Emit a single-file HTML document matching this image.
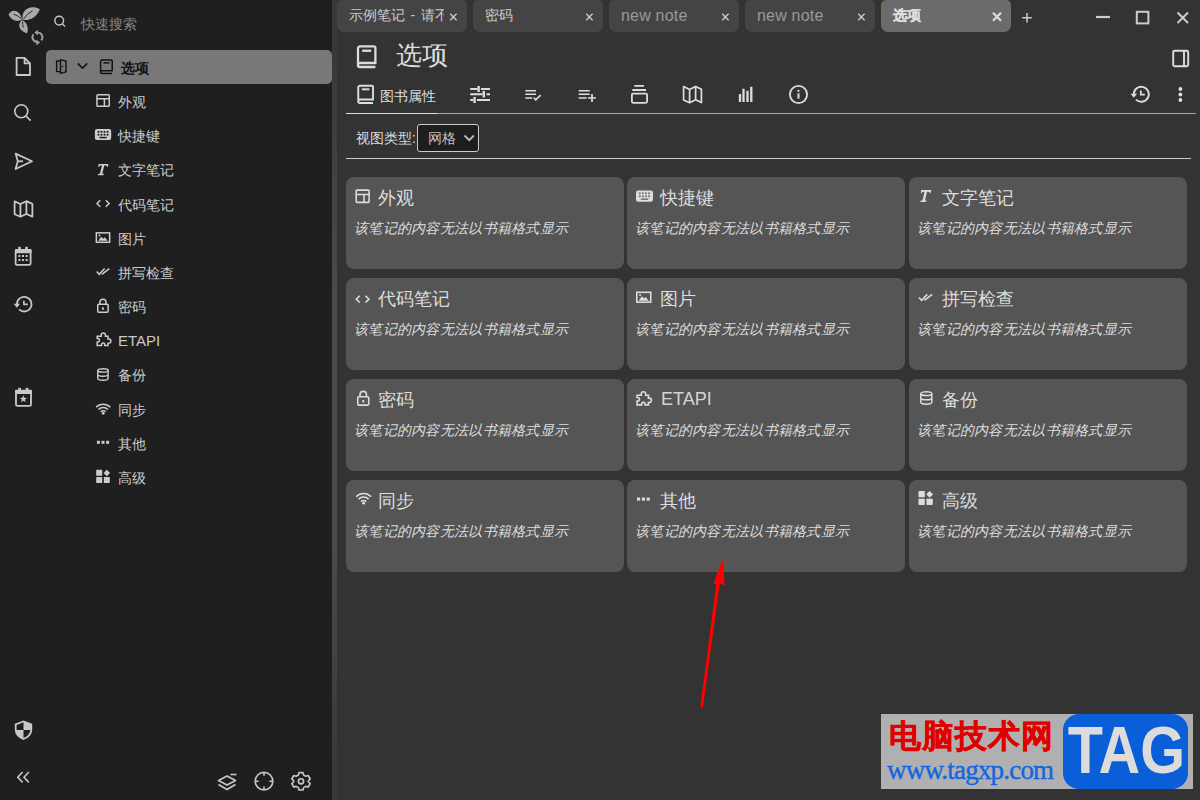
<!DOCTYPE html>
<html><head><meta charset="utf-8">
<style>
*{box-sizing:border-box}
html,body{margin:0;padding:0;width:1200px;height:800px;overflow:hidden;background:#333;font-family:"Liberation Sans",sans-serif;color:#ccc}
.a{position:absolute}
svg{position:absolute;overflow:visible}
#side{left:0;top:0;width:332px;height:800px;background:#1f1f1f}
#strip{left:332px;top:0;width:5px;height:800px;background:linear-gradient(#383838 0px,#393939 60px,#4b4b4b 300px,#4b4b4b 540px,#393939 760px,#383838 800px)}
.tab{top:0;height:32px;width:130px;background:#444;border-radius:5px 5px 7px 7px;font-size:14px;color:#ccc}
.tab .t{position:absolute;left:12px;top:6px;white-space:nowrap;line-height:18px}
.tab .x{position:absolute;right:10px;top:10px;width:12px;height:12px}
.item{left:118px;font-size:14px;line-height:16px;color:#ccc;white-space:nowrap}
.card{width:278px;height:92px;background:#555;border-radius:8px}
.card .ti{position:absolute;left:32px;top:10px;font-size:18px;line-height:22px;color:#ddd;white-space:nowrap}
.card .de{position:absolute;left:8px;top:43px;font-size:14px;line-height:16px;font-style:italic;color:#ddd;white-space:nowrap;letter-spacing:0.28px}
.card svg{left:9px;top:12px}
.card[style*="left:627px"] .ti,.card[style*="left:909px"] .ti{left:33px}
</style></head><body>
<div id="side" class="a"></div>
<div id="strip" class="a"></div>

<!-- selected row -->
<div class="a" style="left:46px;top:50px;width:286px;height:34px;background:#787878;border-radius:5px"></div>

<!-- quick search -->
<div class="a" style="left:81px;top:15px;font-size:14px;color:#858585;line-height:18px">快速搜索</div>
<div class="a" style="left:121px;top:60px;font-size:14px;line-height:16px;color:#111;font-weight:bold">选项</div>

<div class="a item" style="top:94px">外观</div>
<div class="a item" style="top:128px">快捷键</div>
<div class="a item" style="top:162px">文字笔记</div>
<div class="a item" style="top:197px">代码笔记</div>
<div class="a item" style="top:231px">图片</div>
<div class="a item" style="top:265px">拼写检查</div>
<div class="a item" style="top:299px">密码</div>
<div class="a item" style="top:332px;font-size:15px;line-height:18px;color:#c8c8c8">ETAPI</div>
<div class="a item" style="top:367px">备份</div>
<div class="a item" style="top:402px">同步</div>
<div class="a item" style="top:436px">其他</div>
<div class="a item" style="top:470px">高级</div>

<!-- tabs -->
<div class="a tab" style="left:337px"><span class="t" style="width:95px;overflow:hidden">示例笔记<span style="padding:0 1.6px"> - </span>请不</span></div>
<div class="a tab" style="left:473px"><span class="t">密码</span></div>
<div class="a tab" style="left:609px"><span class="t" style="color:#999;font-size:16px;top:7px;letter-spacing:0.2px">new note</span></div>
<div class="a tab" style="left:745px"><span class="t" style="color:#999;font-size:16px;top:7px;letter-spacing:0.2px">new note</span></div>
<div class="a tab" style="left:881px;background:#6b6b6b"><span class="t" style="color:#ddd;font-weight:bold;-webkit-text-stroke:0.3px #ddd">选项</span></div>

<!-- title -->
<div class="a" style="left:396px;top:40px;font-size:26px;line-height:30px;color:#ddd">选项</div>

<!-- ribbon -->
<div class="a" style="left:380px;top:87px;font-size:14px;line-height:18px;color:#ddd">图书属性</div>
<div class="a" style="left:346px;top:113px;width:850px;height:1px;background:#a8a8a8"></div>
<div class="a" style="left:346px;top:113px;width:91px;height:1px;background:#ddd"></div>

<div class="a" style="left:356px;top:129px;font-size:14px;line-height:18px;color:#ddd">视图类型:</div>
<div class="a" style="left:417px;top:124px;width:62px;height:28px;background:#1e1e1e;border:1px solid #ccc;border-radius:3px"></div>
<div class="a" style="left:428px;top:129px;font-size:14px;line-height:18px;color:#c0c0c0">网格</div>
<div class="a" style="left:346px;top:158px;width:845px;height:1px;background:#ccc"></div>

<!-- cards -->
<div class="a card" style="left:346px;top:177px"><span class="ti">外观</span><span class="de">该笔记的内容无法以书籍格式显示</span></div>
<div class="a card" style="left:627px;top:177px"><span class="ti">快捷键</span><span class="de">该笔记的内容无法以书籍格式显示</span></div>
<div class="a card" style="left:909px;top:177px"><span class="ti">文字笔记</span><span class="de">该笔记的内容无法以书籍格式显示</span></div>
<div class="a card" style="left:346px;top:278px"><span class="ti">代码笔记</span><span class="de">该笔记的内容无法以书籍格式显示</span></div>
<div class="a card" style="left:627px;top:278px"><span class="ti">图片</span><span class="de">该笔记的内容无法以书籍格式显示</span></div>
<div class="a card" style="left:909px;top:278px"><span class="ti">拼写检查</span><span class="de">该笔记的内容无法以书籍格式显示</span></div>
<div class="a card" style="left:346px;top:379px"><span class="ti">密码</span><span class="de">该笔记的内容无法以书籍格式显示</span></div>
<div class="a card" style="left:627px;top:379px"><span class="ti" style="top:9px;left:34px;color:#d4d4d4">ETAPI</span><span class="de">该笔记的内容无法以书籍格式显示</span></div>
<div class="a card" style="left:909px;top:379px"><span class="ti">备份</span><span class="de">该笔记的内容无法以书籍格式显示</span></div>
<div class="a card" style="left:346px;top:480px"><span class="ti">同步</span><span class="de">该笔记的内容无法以书籍格式显示</span></div>
<div class="a card" style="left:627px;top:480px"><span class="ti">其他</span><span class="de">该笔记的内容无法以书籍格式显示</span></div>
<div class="a card" style="left:909px;top:480px"><span class="ti">高级</span><span class="de">该笔记的内容无法以书籍格式显示</span></div>


<div class="a" style="left:881px;top:714px;width:312px;height:75px;background:#b0b0b0"></div>
<div class="a" style="left:889px;top:716px;font-size:32px;line-height:40px;font-weight:bold;letter-spacing:1px;color:#e00000;-webkit-text-stroke:0.5px #e00000">电脑技术网</div>
<div class="a" style="left:887px;top:754px;font-family:'Liberation Serif',serif;font-size:27px;line-height:32px;letter-spacing:-0.8px;color:#1166e0;-webkit-text-stroke:0.4px #1166e0">www.tagxp.com</div>
<div class="a" style="left:1063px;top:714px;width:125px;height:75px;background:#0a5fd8;border-radius:16px"></div>
<div class="a" style="left:1059px;top:708px;width:125px;text-align:center;font-size:67px;line-height:84px;font-weight:bold;color:#dcdcdc;transform:scaleX(0.86);transform-origin:62px 0">TAG</div>

<svg width="1200" height="800" style="left:0;top:0">
<defs>
 <g id="i-layout" fill="none" stroke-width="1.5"><rect x=".75" y=".75" width="12.3" height="11.7" rx=".9"/><path d="M.75 4.9H13.05M8.2 4.9V12.45"/></g>
 <g id="i-kbd"><rect x="0" y="0" width="16.3" height="11" rx="2" stroke="none"/><g style="fill:var(--hole)" stroke="none"><rect x="2.7" y="1.9" width="1.8" height="1.8"/><rect x="5.7" y="1.9" width="1.8" height="1.8"/><rect x="8.7" y="1.9" width="1.8" height="1.8"/><rect x="11.7" y="1.9" width="1.8" height="1.8"/><rect x="2.7" y="4.8" width="1.8" height="1.8"/><rect x="5.7" y="4.8" width="1.8" height="1.8"/><rect x="8.7" y="4.8" width="1.8" height="1.8"/><rect x="11.7" y="4.8" width="1.8" height="1.8"/><rect x="4.6" y="7.8" width="7.2" height="1.5"/></g></g>
 <g id="i-text" stroke="none"><path d="M1.2 0H11.4L10.8 3H10.1Q10 1.6 8.6 1.6H7.3L5.3 9.9H6.8L6.5 11.4H0.9L1.2 9.9H2.9L4.9 1.6H3.9Q2.6 1.6 1.9 3H1.2L1.6 0Z"/></g>
 <g id="i-code" fill="none" stroke-width="1.45"><path d="M4.3 .7L1 3.95L4.3 7.2M9.8 .7L13.1 3.95L9.8 7.2"/></g>
 <g id="i-image"><rect x=".75" y=".75" width="13.3" height="9.4" fill="none" stroke-width="1.5"/><path d="M2.6 8.7L5.6 4.6L7.6 6.6L9.1 5.2L12.2 8.7Z" stroke="none"/><circle cx="3.9" cy="3.4" r="1" stroke="none"/></g>
 <g id="i-check2" fill="none" stroke-width="1.5"><path d="M.7 3.8L3.3 6.5L8.6 .8M5.9 6.5L13.3 .8"/></g>
 <g id="i-lock" fill="none" stroke-width="1.5"><path d="M2.9 6.2V4.1A3.05 3.05 0 0 1 9 4.1V6.2"/><rect x=".75" y="6.2" width="10.4" height="7.95" rx="1"/><path d="M5.95 9.2V11.6" stroke-width="1.8"/></g>
 <g id="i-ext" fill="none" stroke-width="1.5"><path d="M1 4H5V2.8A2.1 2.1 0 0 1 9.2 2.8V4H11.8V6.8H12.6A2.1 2.1 0 0 1 12.6 11H11.8V13.2H8.6V12.4A1.6 1.6 0 0 0 5.4 12.4V13.2H1V9.6H1.6A1.7 1.7 0 0 0 1.6 6.2H1Z"/></g>
 <g id="i-data" fill="none" stroke-width="1.4"><ellipse cx="5.95" cy="2.4" rx="5.2" ry="1.7"/><path d="M.75 2.4V10.6A5.2 1.7 0 0 0 11.15 10.6V2.4M.75 6.5A5.2 1.7 0 0 0 11.15 6.5"/></g>
 <g id="i-wifi" stroke-width="1.5"><path fill="none" d="M.8 4.4A10 10 0 0 1 15 4.4M3.1 6.8A6.8 6.8 0 0 1 12.7 6.8M5.4 9.1A3.5 3.5 0 0 1 10.4 9.1"/><circle cx="7.9" cy="10.6" r="1.4" stroke="none"/></g>
 <g id="i-dots" stroke="none"><rect x="0" y="0" width="3" height="3"/><rect x="4.6" y="0" width="3" height="3"/><rect x="9.2" y="0" width="3" height="3"/></g>
 <g id="i-widget" stroke="none"><rect x="0" y="0" width="6" height="6" rx=".6"/><rect x="0" y="7.3" width="6" height="6" rx=".6"/><rect x="7.6" y="7.3" width="6" height="6" rx=".6"/><path d="M10.6 0L13.9 3.2L10.6 6.4L7.4 3.2Z"/></g>
 <g id="i-book" fill="none"><path d="M1 14V2.2A1.3 1.3 0 0 1 2.3 .9H11.7A.9 .9 0 0 1 12.6 1.8V11.6H2.3A1.3 1.3 0 0 0 1 12.9A1.3 1.3 0 0 0 2.3 14.2H12.6" stroke-width="1.5"/><path d="M3.8 3.7H9.8" stroke-width="1.5"/></g>
</defs>

<!-- logo -->
<g fill="#a9a9a9">
 <path d="M22 19.6C20.5 10 11.5 8 8.6 14.6C11 20.5 17.5 22.5 22 19.6Z"/>
 <path d="M22.6 19.8C21 10 30 4 39.8 9.2C37 17 30 21 22.6 19.8Z"/>
 <path d="M22 20C17.5 24 18 30 27 33.5C29 27.5 27 22.5 22 20Z"/>
</g>
<g stroke="#1f1f1f" stroke-width=".9" fill="none">
 <path d="M23.5 19.2Q27 13.5 32.5 10.8"/><path d="M13.5 14.2Q18 15.5 21.3 18.6"/><path d="M22.5 21.5Q22.6 24.5 23.3 27.5"/>
</g>
<g fill="none" stroke="#a0a0a0" stroke-width="1.9">
 <path d="M37.4 32.7A4.6 4.6 0 0 1 41.2 40.4"/><path d="M33.5 34.3A4.6 4.6 0 0 0 37.2 41.8"/>
</g>
<g fill="#a0a0a0"><path d="M34.4 32.6L38 29.7L37.8 35.5Z"/><path d="M40.1 42.5L36.4 39.7L36.4 45.3Z"/></g>

<!-- search bar icon -->
<g fill="none" stroke="#c8c8c8" stroke-width="1.4"><circle cx="59.2" cy="20.6" r="4.4"/><path d="M62.3 23.7L65 26.4"/></g>

<!-- launcher icons -->
<g fill="none" stroke="#c8c8c8" stroke-width="1.8" stroke-linejoin="round">
 <path d="M16.6 57.9H24.6L30 63.4V75H16.6Z"/><path d="M24.6 57.9V63.4H30"/>
 <circle cx="21.3" cy="111.3" r="6.5" stroke-width="1.6"/><path d="M26 116L30.6 120.6" stroke-width="1.7"/>
 <path d="M15.6 153.6L32 161.3L15.6 169L17.8 161.3Z"/><path d="M17.8 161.3H23"/>
 <path d="M14.6 201.4L20.4 204L26.4 201.2L32.4 203.8V216.6L26.4 214L20.4 216.8L14.6 214.2Z" stroke-width="1.8"/><path d="M20.4 204V216.8M26.4 201.2V214" stroke-width="1.8"/>
 <rect x="15.6" y="250" width="15" height="14.8" rx="1.4"/>
 <path d="M16.9 304.2A7.3 7.3 0 1 1 19.04 309.36" /><path d="M23.9 300.8V304.4H27.8" stroke-width="1.6"/>
 <rect x="16" y="390.8" width="15" height="15" rx="1.4"/>
 <path d="M18 783L24 777L30 783" transform="rotate(-90 23.5 777)" stroke="none"/>
</g>
<g fill="#c8c8c8">
 <rect x="15" y="249" width="16.6" height="4.2" rx="1"/><rect x="18.2" y="246.8" width="2.6" height="3"/><rect x="25.2" y="246.8" width="2.6" height="3"/>
 <rect x="18.4" y="255" width="2" height="2"/><rect x="22" y="255" width="2" height="2"/><rect x="25.6" y="255" width="2" height="2"/>
 <rect x="18.4" y="259" width="2" height="2"/><rect x="22" y="259" width="2" height="2"/><rect x="25.6" y="259" width="2" height="2"/>
 <path d="M13.7 303.8H20.1L16.9 307.8Z"/>
 <rect x="15" y="389.8" width="17" height="4.2" rx="1"/><rect x="18.2" y="387.8" width="2.8" height="3"/><rect x="25.6" y="387.8" width="2.8" height="3"/>
 <path d="M23.4 395.2L24.4 397.7L27 397.9L25 399.6L25.6 402.2L23.4 400.8L21.2 402.2L21.8 399.6L19.8 397.9L22.4 397.7Z"/>
 <path d="M23.5 720.6L32.2 723.8V730Q32 736.5 23.5 740Q15 736.5 14.8 730V723.8Z"/>
</g>
<path d="M23.5 722.4V738.2M16.6 730H30.4" stroke="#1f1f1f" stroke-width="0" />
<path d="M16.6 724.9L23.5 722.3V730H16.6Z" fill="#1f1f1f"/><path d="M23.5 730H30.4Q30 735 23.5 738Z" fill="#1f1f1f"/>
<g fill="none" stroke="#c8c8c8" stroke-width="1.6">
 <path d="M22.6 772L17.8 777.2L22.6 782.4M28.8 772L24 777.2L28.8 782.4"/>
 <path d="M218.5 780.5L227 776L235.5 780.5L227 785Z" stroke-linejoin="round"/><path d="M218.5 784.5L227 789.5L235.5 784.5"/><path d="M230.5 774.5H236.5"/>
 <circle cx="264" cy="781.2" r="8.8"/><path d="M264 772.4V775.8M264 786.6V790M255.2 781.2H258.6M269.4 781.2H272.8"/>
 <circle cx="301" cy="781.3" r="2.6"/>
 <path d="M299 772.6H303L303.6 775L305.8 776.2L308.2 775.5L310.2 779L308.4 780.7V782L310.2 783.6L308.2 787L305.8 786.4L303.6 787.6L303 790H299L298.4 787.6L296.2 786.4L293.8 787L291.8 783.6L293.6 782V780.7L291.8 779L293.8 775.5L296.2 776.2L298.4 775Z" stroke-linejoin="round"/>
</g>

<!-- tree row icons (dark) -->
<g fill="none" stroke="#111" stroke-width="1.4" stroke-linejoin="round">
 <path d="M60.5 61H56.6V71.6H60.5"/><path d="M60.5 59.6L66 61.2V71.8L60.5 73.4Z"/>
 <path d="M77.8 63.4L82.5 68.2L87.2 63.4" stroke-width="1.6"/>
</g>
<circle cx="62.6" cy="66.5" r=".8" fill="#111"/>
<use href="#i-book" x="99.6" y="59.2" stroke="#111"/>

<!-- tree child icons -->
<g fill="#cccccc" stroke="#cccccc" style="--hole:#1f1f1f">
 <use href="#i-layout" x="96.2" y="93.9"/>
 <use href="#i-kbd" x="94.9" y="129"/>
 <use href="#i-text" x="97" y="163.9"/>
 <use href="#i-code" x="96" y="199.6"/>
 <use href="#i-image" x="95.6" y="232.1"/>
 <use href="#i-check2" x="96" y="267.8"/>
 <use href="#i-lock" x="97" y="298.1"/>
 <use href="#i-ext" x="96.2" y="332.3"/>
 <use href="#i-data" x="97" y="368"/>
 <use href="#i-wifi" x="95.3" y="402.7"/>
 <use href="#i-dots" x="96.9" y="440.8"/>
 <use href="#i-widget" x="96.2" y="469.8"/>
</g>

<!-- tabs close -->
<g stroke="#ccc" stroke-width="1.5" fill="none">
 <path d="M450.2 13.8L456.6 20.2M456.6 13.8L450.2 20.2" stroke-width="1.4"/>
 <path d="M586.2 13.8L592.6 20.2M592.6 13.8L586.2 20.2" stroke-width="1.4"/>
 <path d="M722.2 13.8L728.6 20.2M728.6 13.8L722.2 20.2" stroke-width="1.4"/>
 <path d="M858.2 13.8L864.6 20.2M864.6 13.8L858.2 20.2" stroke-width="1.4"/>
 <path d="M993 12.8L1001 20.8M1001 12.8L993 20.8" stroke-width="2.2" stroke="#ddd"/>
 <path d="M1027 13V22.6M1022.2 17.8H1031.8" stroke-width="1.5"/>
 <path d="M1096 17H1110" stroke-width="2.2"/>
 <rect x="1136.8" y="11.8" width="11.6" height="11.6" stroke-width="2"/>
 <path d="M1177.5 12.5L1188 23M1188 12.5L1177.5 23" stroke-width="2"/>
</g>

<!-- title + ribbon icons -->
<g stroke="#ddd" fill="#ddd">
 <use href="#i-book" transform="translate(356.5 45) scale(1.5 1.55)" stroke-width="1"/>
 <use href="#i-book" transform="translate(357 84.5) scale(1.27 1.3)"/>
</g>
<g fill="none" stroke="#ddd" stroke-width="1.9">
 <rect x="1173.2" y="50.7" width="15" height="15.6" rx="1.5"/><path d="M1184 50.7V66.3"/>
 <path d="M470.2 88.9H477.4M481 88.9H490M470.2 94.2H482.5M486.5 94.2H490M470.2 100H473.2M477 100H490" stroke-width="2"/><path d="M478.6 85.9V91.9M483.8 91V97.4M474.6 97V103" stroke-width="2.4"/>
 <path d="M525.3 90.7H536M525.3 94.2H536M525.3 98H532.3" stroke-width="1.6"/><path d="M533.9 97.9L535.8 99.8L540.6 95.2" stroke-width="1.7"/>
 <path d="M578.7 90.7H589.7M578.7 94.2H589.7M578.7 98H586.7" stroke-width="1.6"/><path d="M588 98H596M592 94V102" stroke-width="1.7"/>
 <path d="M634.3 85.9H644M632.3 90H646" stroke-width="1.8"/><rect x="631.9" y="93.6" width="15.2" height="9.2" rx="1.2" stroke-width="1.8"/>
 <path d="M683.6 86.6L689.6 89.4L695.6 86.4L701.4 89.2V102.6L695.6 99.8L689.6 102.8L683.6 100Z" stroke-linejoin="round" stroke-width="1.7"/><path d="M689.6 89.4V102.8M695.6 86.4V99.8" stroke-width="1.7"/>
 <path d="M740 94V102M743.5 88.7V102M747.5 90.7V102M751.3 86.7V102" stroke-width="2.3" stroke-linecap="butt"/>
 <circle cx="798.5" cy="94.5" r="8.6" stroke-width="1.8"/><path d="M798.5 93.3V98.7" stroke-width="2"/>
 <path d="M1133.8 94.3A7.5 7.5 0 1 1 1136 99.6" stroke-width="1.9"/><path d="M1140.8 90.6V94.6H1144.8" stroke-width="1.7"/>
 <path d="M471 363" />
 <path d="M464.5 135.5L469.2 140.2L473.9 135.5" stroke="#bbb" stroke-width="1.8"/>
</g>
<g fill="#ddd">
 <circle cx="798.5" cy="90.8" r="1.1"/>
 <path d="M1130.6 93.8H1137L1133.8 97.8Z"/>
 <circle cx="1180.4" cy="89" r="1.9"/><circle cx="1180.4" cy="94.5" r="1.9"/><circle cx="1180.4" cy="100" r="1.9"/>
</g>

<!-- card icons -->
<g fill="#dddddd" stroke="#dddddd" style="--hole:#777">
 <use href="#i-layout" transform="translate(355.4 189.3) scale(1.05)"/>
 <use href="#i-kbd" transform="translate(636 190.4) scale(1.04 1.03)"/>
 <use href="#i-text" transform="translate(919.5 190) scale(1.03 1.06)"/>
 <use href="#i-code" transform="translate(355.2 295) scale(1.05)"/>
 <use href="#i-image" transform="translate(636 291.5) scale(1.05)"/>
 <use href="#i-check2" transform="translate(918.2 293.5) scale(1.05)"/>
 <use href="#i-lock" transform="translate(357 390.3) scale(1.05)"/>
 <use href="#i-ext" transform="translate(636 391) scale(1.05)"/>
 <use href="#i-data" transform="translate(920 391.1) scale(1.06)"/>
 <use href="#i-wifi" transform="translate(355.3 492) scale(1.05)"/>
 <use href="#i-dots" transform="translate(637 497.5) scale(1.05)"/>
 <use href="#i-widget" transform="translate(918.5 491) scale(1.05)"/>
</g>

<!-- red arrow -->
<path d="M700.3 707.2L703 707.6L720 582L716.5 581.5Z" fill="#ff0000"/>
<path d="M722.5 559.6L713 584.5L718.5 583L724.7 585.5Z" fill="#ff0000"/>
</svg>
</body></html>
